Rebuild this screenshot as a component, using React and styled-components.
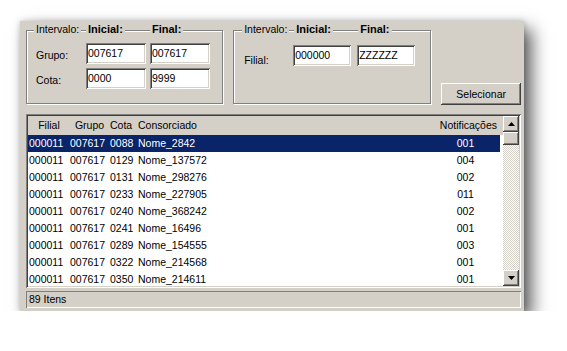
import styled, { createGlobalStyle } from "styled-components"

const GlobalStyle = createGlobalStyle`
  body {
    margin: 0;
    background: #ffffff;
    font-family: "Liberation Sans", Arial, sans-serif;
    font-size: 10.5px;
    color: #000;
  }
`

const face = "#d4d0c8"

const sunken = `
  box-shadow: inset 1px 1px 0 #808080, inset -1px -1px 0 #ffffff,
    inset 2px 2px 0 #404040, inset -2px -2px 0 ${face};
`

const raised = `
  box-shadow: inset -1px -1px 0 #404040, inset 1px 1px 0 #ffffff,
    inset -2px -2px 0 #808080, inset 2px 2px 0 ${face};
`

const Window = styled.div`
  width: 504px;
  margin: 21px 0 0 20px;
  padding: 9px 3px 3px 6px;
  box-sizing: border-box;
  background: ${face};
  box-shadow: 8px 8px 16px rgba(0, 0, 0, 0.62), 0 0 6px rgba(0, 0, 0, 0.2);
  display: flex;
  flex-direction: column;
`

const TopRow = styled.div`
  display: flex;
  align-items: flex-end;
  gap: 10px;
`

const GroupBox = styled.div`
  position: relative;
  width: ${(p) => p.$w}px;
  height: 74px;
  box-sizing: border-box;
  border: 1px solid #808080;
  box-shadow: inset 1px 1px 0 #ffffff, 1px 1px 0 #ffffff;
  padding: ${(p) => p.$pt}px 0 0 ${(p) => p.$pl}px;
  margin-bottom: 1px;
`

const Caption = styled.div`
  position: absolute;
  top: -8px;
  left: ${(p) => p.$pl - 2}px;
  display: grid;
  grid-template-columns: ${(p) => p.$cols};
  column-gap: ${(p) => p.$gap}px;
  line-height: 13px;
`

const CaptionText = styled.span`
  justify-self: start;
  background: ${face};
  padding: 0 2px;
  margin-left: ${(p) => p.$ml || 0}px;
  font-weight: ${(p) => (p.$bold ? "bold" : "normal")};
  font-size: ${(p) => (p.$bold ? "11px" : "10.5px")};
`

const FieldGrid = styled.div`
  display: grid;
  grid-template-columns: ${(p) => p.$cols};
  column-gap: ${(p) => p.$gap}px;
  row-gap: 4px;
`

const Label = styled.div`
  padding-top: ${(p) => p.$pt}px;
  line-height: 13px;
`

const Field = styled.div`
  height: 21px;
  box-sizing: border-box;
  background: #ffffff;
  padding: 0 2px;
  line-height: 21px;
  ${sunken}
`

const Button = styled.div`
  margin-left: auto;
  width: 80px;
  height: 22px;
  line-height: 22px;
  text-align: center;
  ${raised}
`

const ListView = styled.div`
  margin-top: 9px;
  height: 174px;
  box-sizing: border-box;
  padding: 2px;
  background: #ffffff;
  display: flex;
  ${sunken}
`

const ListBody = styled.div`
  flex: 1;
  overflow: hidden;
`

const cols = "41px 40px 28px 293px 70px"

const HeaderRow = styled.div`
  display: grid;
  grid-template-columns: ${cols};
  height: 19px;
  line-height: 19px;
  background: ${face};
  font-size: 10.5px;
`

const HeadCell = styled.div`
  text-align: ${(p) => p.$align || "left"};
  padding: ${(p) => (p.$align === "right" ? "0 3px 0 0" : "0 0 0 1px")};
  white-space: nowrap;
`

const Row = styled.div`
  display: grid;
  grid-template-columns: ${cols};
  width: 472px;
  height: 17px;
  line-height: 17px;
  background: ${(p) => (p.$selected ? "#0a246a" : "transparent")};
  color: ${(p) => (p.$selected ? "#ffffff" : "#000000")};
`

const Cell = styled.div`
  padding-left: 1px;
  text-align: ${(p) => p.$align || "left"};
  white-space: nowrap;
`

const ScrollBar = styled.div`
  width: 16px;
  display: flex;
  flex-direction: column;
  background: repeating-conic-gradient(${face} 0 25%, #ffffff 0 50%) 0 0 / 2px 2px;
`

const ScrollButton = styled.div`
  width: 16px;
  height: 16px;
  background: ${face};
  display: flex;
  align-items: center;
  justify-content: center;
  ${raised}
`

const Thumb = styled.div`
  width: 16px;
  height: 13px;
  background: ${face};
  ${raised}
`

const Track = styled.div`
  flex: 1;
`

const StatusBar = styled.div`
  margin-top: 3px;
  height: 17px;
  line-height: 17px;
  padding-left: 3px;
  box-sizing: border-box;
  box-shadow: inset 1px 1px 0 #808080, inset -1px -1px 0 #ffffff;
`

const Arrow = ({ down }) => (
  <svg width="7" height="4" viewBox="0 0 7 4">
    <polygon points={down ? "0,0 7,0 3.5,4" : "0,4 7,4 3.5,0"} fill="#000" />
  </svg>
)

const rows = [
  ["0088", "Nome_2842", "001"],
  ["0129", "Nome_137572", "004"],
  ["0131", "Nome_298276", "002"],
  ["0233", "Nome_227905", "011"],
  ["0240", "Nome_368242", "002"],
  ["0241", "Nome_16496", "001"],
  ["0289", "Nome_154555", "003"],
  ["0322", "Nome_214568", "001"],
  ["0350", "Nome_214611", "001"],
]

const App = () => {
  return (
    <>
      <GlobalStyle />
      <Window>
        <TopRow>
          <GroupBox $w={198} $pt={12} $pl={9}>
            <Caption $pl={9} $cols="46px 60px 60px" $gap={4}>
              <CaptionText>Intervalo:</CaptionText>
              <CaptionText $bold $ml={2}>Inicial:</CaptionText>
              <CaptionText $bold $ml={2}>Final:</CaptionText>
            </Caption>
            <FieldGrid $cols="46px 60px 60px" $gap={4}>
              <Label $pt={6}>Grupo:</Label>
              <Field>007617</Field>
              <Field>007617</Field>
              <Label $pt={6}>Cota:</Label>
              <Field>0000</Field>
              <Field>9999</Field>
            </FieldGrid>
          </GroupBox>
          <GroupBox $w={199} $pt={14} $pl={10}>
            <Caption $pl={10} $cols="43px 58px 58px" $gap={6}>
              <CaptionText>Intervalo:</CaptionText>
              <CaptionText $bold $ml={3}>Inicial:</CaptionText>
              <CaptionText $bold $ml={3}>Final:</CaptionText>
            </Caption>
            <FieldGrid $cols="43px 58px 58px" $gap={6}>
              <Label $pt={9}>Filial:</Label>
              <Field>000000</Field>
              <Field>ZZZZZZ</Field>
            </FieldGrid>
          </GroupBox>
          <Button>Selecionar</Button>
        </TopRow>
        <ListView>
          <ListBody>
            <HeaderRow>
              <HeadCell $align="center">Filial</HeadCell>
              <HeadCell $align="center">Grupo</HeadCell>
              <HeadCell>Cota</HeadCell>
              <HeadCell>Consorciado</HeadCell>
              <HeadCell $align="right">Notificações</HeadCell>
            </HeaderRow>
            {rows.map(([cota, nome, notif], i) => (
              <Row key={cota} $selected={i === 0}>
                <Cell>000011</Cell>
                <Cell>007617</Cell>
                <Cell>{cota}</Cell>
                <Cell>{nome}</Cell>
                <Cell $align="center">{notif}</Cell>
              </Row>
            ))}
          </ListBody>
          <ScrollBar>
            <ScrollButton>
              <Arrow />
            </ScrollButton>
            <Thumb />
            <Track />
            <ScrollButton>
              <Arrow down />
            </ScrollButton>
          </ScrollBar>
        </ListView>
        <StatusBar>89 Itens</StatusBar>
      </Window>
    </>
  )
}

export default App
